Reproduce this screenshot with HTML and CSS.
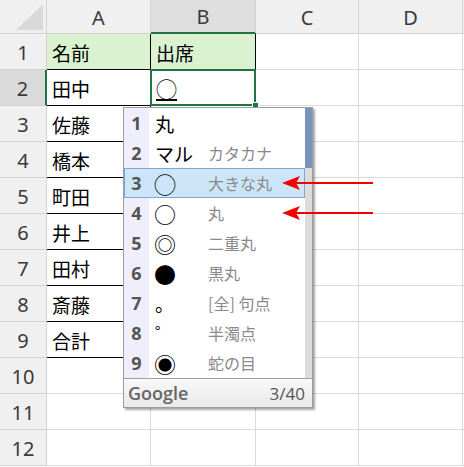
FILE: index.html
```html
<!DOCTYPE html>
<html lang="ja">
<head>
<meta charset="utf-8">
<title>Sheet</title>
<link rel="stylesheet" href="styles.css">
</head>
<body>
<div class="sheet">
  <div class="hdr corner"><svg width="46" height="33" viewBox="0 0 46 33"><polygon points="43,4 43,30 16,30" fill="#d9d9d9"/></svg></div>
  <div class="hdr col">A</div>
  <div class="hdr col csel">B</div>
  <div class="hdr col">C</div>
  <div class="hdr col">D</div>
  <div class="hdr col"></div>

  <div class="hdr row">1</div><div class="cell t head">名前</div><div class="cell t head">出席</div><div class="cell"></div><div class="cell"></div><div class="cell"></div>
  <div class="hdr row rsel">2</div><div class="cell t">田中</div><div class="cell t active"><span class="comp">◯</span></div><div class="cell"></div><div class="cell"></div><div class="cell"></div>
  <div class="hdr row">3</div><div class="cell t">佐藤</div><div class="cell t"></div><div class="cell"></div><div class="cell"></div><div class="cell"></div>
  <div class="hdr row">4</div><div class="cell t">橋本</div><div class="cell t"></div><div class="cell"></div><div class="cell"></div><div class="cell"></div>
  <div class="hdr row">5</div><div class="cell t">町田</div><div class="cell t"></div><div class="cell"></div><div class="cell"></div><div class="cell"></div>
  <div class="hdr row">6</div><div class="cell t">井上</div><div class="cell t"></div><div class="cell"></div><div class="cell"></div><div class="cell"></div>
  <div class="hdr row">7</div><div class="cell t">田村</div><div class="cell t"></div><div class="cell"></div><div class="cell"></div><div class="cell"></div>
  <div class="hdr row">8</div><div class="cell t">斎藤</div><div class="cell t"></div><div class="cell"></div><div class="cell"></div><div class="cell"></div>
  <div class="hdr row">9</div><div class="cell t">合計</div><div class="cell t"></div><div class="cell"></div><div class="cell"></div><div class="cell"></div>
  <div class="hdr row">10</div><div class="cell"></div><div class="cell"></div><div class="cell"></div><div class="cell"></div><div class="cell"></div>
  <div class="hdr row">11</div><div class="cell"></div><div class="cell"></div><div class="cell"></div><div class="cell"></div><div class="cell"></div>
  <div class="hdr row">12</div><div class="cell"></div><div class="cell"></div><div class="cell"></div><div class="cell"></div><div class="cell"></div>
</div>

<div class="ime">
  <div class="ime-body">
    <ul class="cands">
      <li><span class="num">1</span><span class="c">丸</span><span class="n"></span></li>
      <li><span class="num">2</span><span class="c">マル</span><span class="n">カタカナ</span></li>
      <li class="on"><span class="num">3</span><span class="c sym">◯</span><span class="n">大きな丸</span></li>
      <li><span class="num">4</span><span class="c sym">○</span><span class="n">丸</span></li>
      <li><span class="num">5</span><span class="c sym">◎</span><span class="n">二重丸</span></li>
      <li><span class="num">6</span><span class="c sym">●</span><span class="n">黒丸</span></li>
      <li><span class="num">7</span><span class="c">。</span><span class="n">[全] 句点</span></li>
      <li><span class="num">8</span><span class="c">゜</span><span class="n">半濁点</span></li>
      <li><span class="num">9</span><span class="c sym">◉</span><span class="n">蛇の目</span></li>
    </ul>
    <div class="scroll"><div class="thumb"></div></div>
  </div>
  <div class="foot"><span class="brand">Google</span><span class="count">3/40</span></div>
</div>

<svg class="arrows" width="464" height="467" viewBox="0 0 464 467">
  <line x1="373" y1="183" x2="295" y2="183" stroke="#f20000" stroke-width="2"/>
  <polygon points="282,183 300,176 296,183 300,190" fill="#f20000"/>
  <line x1="373" y1="213" x2="295" y2="213" stroke="#f20000" stroke-width="2"/>
  <polygon points="282,213 300,206 296,213 300,220" fill="#f20000"/>
</svg>
</body>
</html>
```

FILE: styles.css
```css
html, body {
  margin: 0;
  padding: 0;
}
body {
  width: 464px;
  height: 467px;
  overflow: hidden;
  position: relative;
  background: #fff;
  font-family: "Noto Sans CJK JP", "Noto Sans", sans-serif;
}

.sheet {
  display: grid;
  grid-template-columns: 47px 104px 105px 103px 104px 1fr;
  grid-template-rows: 34px repeat(12, 36px);
}

.hdr {
  box-sizing: border-box;
  background: #f0f0f0;
  border-right: 1px solid #d2d2d2;
  border-bottom: 1px solid #d2d2d2;
  display: flex;
  align-items: center;
  justify-content: center;
  color: #3a3a3a;
  font-family: "Noto Sans", sans-serif;
  font-size: 20px;
  padding-top: 1px;
}
.corner {
  align-items: flex-start;
  justify-content: flex-start;
  padding: 0;
}
.corner svg { display: block; }
.csel {
  background: #dedede;
  border-bottom: 2px solid #217346;
}
.rsel {
  background: #dadada;
  border-right: 2px solid #217346;
}

.cell {
  box-sizing: border-box;
  border-right: 1px solid #dadada;
  border-bottom: 1px solid #dadada;
  display: flex;
  align-items: center;
  padding-left: 5px;
  padding-top: 2px;
  font-size: 19px;
  color: #000;
}
.t {
  border-right-color: #000;
  border-bottom-color: #000;
}
.head {
  background: #daf2d0;
}
.active {
  position: relative;
}
.active::before {
  content: "";
  position: absolute;
  left: -1px;
  top: -1px;
  right: -1px;
  bottom: -1px;
  border: 2px solid #217346;
}
.active::after {
  content: "";
  position: absolute;
  right: -4px;
  bottom: -4px;
  width: 5px;
  height: 5px;
  background: #217346;
  border: 1px solid #fff;
}
.comp {
  font-size: 21px;
  line-height: 1;
  text-decoration: underline;
  text-decoration-thickness: 2px;
  text-underline-offset: 2px;
}

.ime {
  position: absolute;
  left: 123px;
  top: 107px;
  width: 190px;
  box-sizing: border-box;
  border: 1px solid #9c9c9c;
  background: #fff;
  box-shadow: 2px 2px 2px rgba(0, 0, 0, 0.35);
}
.ime-body {
  display: flex;
  height: 270px;
}
.cands {
  list-style: none;
  margin: 0;
  padding: 0;
  flex: 1;
}
.cands li {
  display: flex;
  align-items: center;
  height: 30px;
}
.num {
  width: 25px;
  align-self: stretch;
  display: flex;
  align-items: center;
  justify-content: center;
  background: #efeffb;
  font-family: "Open Sans", sans-serif;
  font-weight: 700;
  font-size: 18px;
  color: #555;
}
.c {
  box-sizing: border-box;
  width: 59px;
  padding-left: 6px;
  font-size: 19px;
  color: #000;
  line-height: 1;
}
.c.sym {
  font-size: 22px;
  padding-left: 5px;
}
.n {
  font-size: 16px;
  color: #8a8a8a;
}
.cands li.on {
  background: #cde5f8;
  box-shadow: inset 0 0 0 1px #7fa6d8;
}
.cands li.on .num {
  background: transparent;
}
.scroll {
  width: 7px;
  background: #dcdcdc;
}
.thumb {
  height: 60px;
  background: #7b93bb;
}
.foot {
  height: 28px;
  border-top: 1px solid #a0a0a0;
  display: flex;
  align-items: center;
  justify-content: space-between;
  padding: 0 7px 0 4px;
  background: linear-gradient(#f8f8f8, #e9e9e9);
  font-family: "Open Sans", sans-serif;
  color: #666;
}
.brand {
  font-size: 18px;
  font-weight: 600;
}
.count {
  font-size: 17px;
  color: #555;
}

.arrows {
  position: absolute;
  left: 0;
  top: 0;
  pointer-events: none;
}
```
